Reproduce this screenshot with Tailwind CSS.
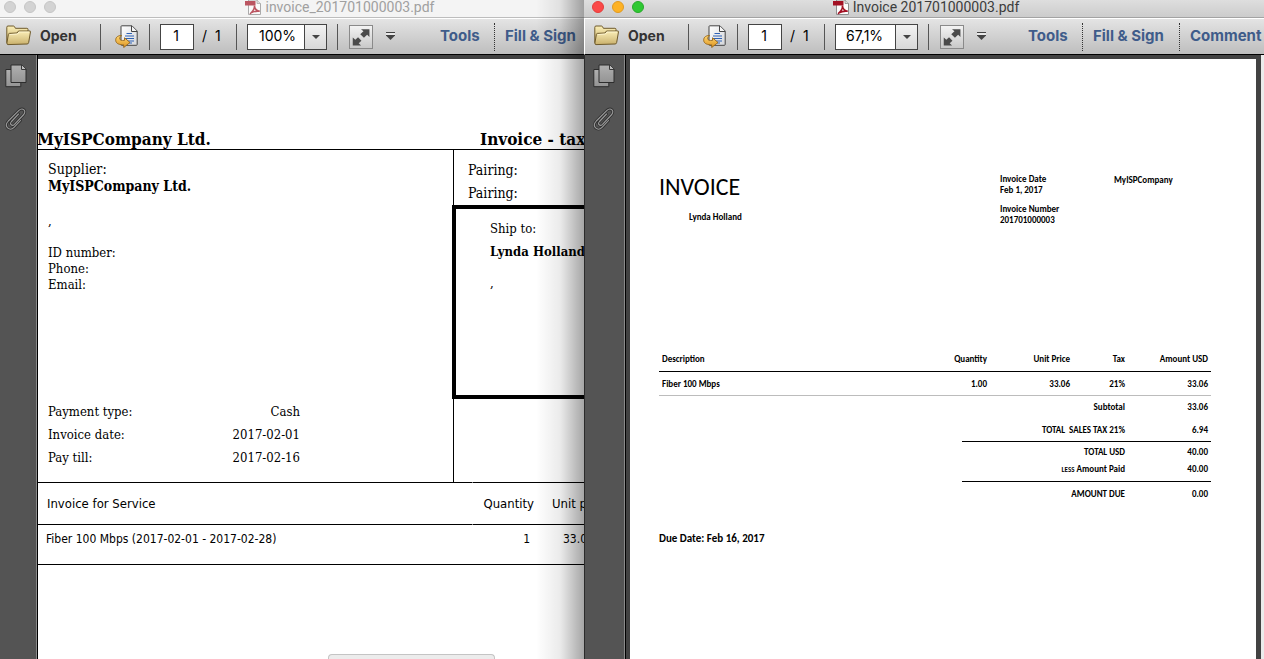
<!DOCTYPE html>
<html lang="en">
<head>
<meta charset="utf-8">
<title>Invoice 201701000003.pdf</title>
<script src="https://cdn.jsdelivr.net/npm/@tailwindcss/browser@4"></script>
</head>
<body class="h-screen overflow-hidden bg-white">
<svg class="absolute size-0" aria-hidden="true">
  <defs>
    <linearGradient id="gf" x1="0" y1="0" x2="0" y2="1"><stop offset="0" stop-color="#fbefb8"/><stop offset="1" stop-color="#c9b06c"/></linearGradient>
    <linearGradient id="gd" x1="0" y1="0" x2="1" y2="1"><stop offset="0" stop-color="#ffffff"/><stop offset="1" stop-color="#d4d6da"/></linearGradient>
    <linearGradient id="ga" x1="0" y1="0" x2="0" y2="1"><stop offset="0" stop-color="#ffd873"/><stop offset="1" stop-color="#dd9422"/></linearGradient>
    <linearGradient id="gp" x1="0" y1="0" x2="0" y2="1"><stop offset="0" stop-color="#b0b0b0"/><stop offset="1" stop-color="#949494"/></linearGradient>
  </defs>
  <symbol id="folder" viewBox="0 0 25 21">
    <path d="M.8 17.800V2.300Q.8 1 2 1h5.400q.8 0 1.200.8l.8 1.500h11.500q1.100 0 1.100 1.100V8" fill="url(#gf)" stroke="#6e5a2c"/>
    <path d="M3.400 8.400 11 8l1.500-2H24q.6 0 .5.700l-1.800 10.700q-.2 1.500-1.600 1.600L2 19.600Q.7 19.400.9 18L2.400 9.400q.2-1 1-1z" fill="url(#gf)" stroke="#6e5a2c"/>
    <path d="M4 9.500l7.500-.5L13 7h10" fill="none" stroke="#fff8d8" stroke-width=".8"/>
  </symbol>
  <symbol id="convert" viewBox="0 0 24 23">
    <path d="M6 1.500Q6 .8 6.800.8H17l5.200 5.200V19.500q0 .8-.8.8H6.800Q6 20.300 6 19.500z" fill="url(#gd)" stroke="#454545"/>
    <path d="M16.500 1v5.500H22" fill="#f5f5f5" stroke="#454545"/>
    <path d="M11.500 8.500H17M10 11h9M10 13.500h9M12 16h7M14 18h3" stroke="#2f63b5" stroke-width="1.200"/>
    <path d="M6.500 10.500C2 10.500.5 13 .7 15.500c.3 3.200 4 4.500 8 4.300v2.700l6.300-5-5.500-4.700v2.600c-3 .3-5-.2-4.800-2.200.1-1 .8-1.800 1.800-2.200z" fill="url(#ga)" stroke="#94641a" stroke-width=".9"/>
  </symbol>
  <symbol id="expand" viewBox="0 0 24 24">
    <path d="M12 3.500h9.200V12l-2.500-2.500-3.500 3.300-4-3.700 3.500-3.300zM3 12.500l2.800 2.600 3-2.800 3.700 3.800-3 2.700 2.600 2.500H3z" fill="#4b4b4b"/>
  </symbol>
  <symbol id="pages" viewBox="0 0 22 24">
    <path d="M.8 5.500h15v17.200H.8z" fill="url(#gp)" stroke="#2d2d2d"/>
    <path d="M6 1h11l4 4v13.500H6z" fill="url(#gp)" stroke="#2d2d2d"/>
    <path d="M16.500 1v4.500H21" fill="#bdbdbd" stroke="#3a3a3a"/>
  </symbol>
  <symbol id="clip" viewBox="0 0 22 24">
    <g fill="none" stroke-linecap="round" stroke-linejoin="round">
      <path d="M13.500 7 6.500 14.500c-2.300 2.600.5 5.200 3 2.800l8.800-9.300c4-4.300-.8-8-4.600-4.400L3.300 14c-5 5.400 1.200 11 6 6.200l6.200-6.700" stroke="#303030" stroke-width="2.800"/>
      <path d="M13.500 7 6.500 14.500c-2.300 2.600.5 5.200 3 2.800l8.800-9.300c4-4.300-.8-8-4.600-4.400L3.300 14c-5 5.400 1.200 11 6 6.200l6.200-6.700" stroke="#9b9b9b" stroke-width="1.100"/>
    </g>
  </symbol>
  <symbol id="pdf" viewBox="0 0 16 16">
    <path d="M3.500 0h8.500l3.500 3.500v11H3.500z" fill="#fdfdfd" stroke="#8d8d8d"/>
    <path d="M12 0v3.500h3.500" fill="#ddd" stroke="#8d8d8d" stroke-width=".8"/>
    <path d="M0 1h10.500v4.500H0z" fill="#a31224"/>
    <path d="M9.500 5.500c.2 3-1.500 6-4.500 8.300M9.500 6c.3 3 2.300 4.800 5.300 5.300-3.300-.6-6.300.2-9.300 1.700" fill="none" stroke="#a31224" stroke-width="1.600"/>
  </symbol>
  <symbol id="more" viewBox="0 0 9 9">
    <path d="M0 3h9" stroke="#fff"/><path d="M0 1.500h9M0 4.500h9" stroke="#444"/><path d="M.5 5h8l-4 4z" fill="#444"/>
  </symbol>
</svg>

<div class="flex h-full">
  <!-- Background window -->
  <section class="relative flex w-[584px] shrink-0 flex-col overflow-hidden" aria-label="invoice_201701000003.pdf">
    <header class="relative flex h-[18px] shrink-0 items-start justify-center border-b border-[#bdbdbd] bg-[#f4f4f4] pl-24">
      <div class="absolute left-1 top-px flex gap-2">
        <button aria-label="Close" class="size-3 rounded-full border border-[#c6c6c6] bg-[#d3d3d3]"></button>
        <button aria-label="Minimize" class="size-3 rounded-full border border-[#c6c6c6] bg-[#d3d3d3]"></button>
        <button aria-label="Zoom" class="size-3 rounded-full border border-[#c6c6c6] bg-[#d3d3d3]"></button>
      </div>
      <svg class="mr-1 h-4 w-4 opacity-70"><use href="#pdf"/></svg>
      <h1 class="font-[Roboto,sans-serif] text-[14px] leading-[15px] text-[#a0a0a0]">invoice_201701000003.pdf</h1>
    </header>
    <div class="flex h-[37px] shrink-0 items-center overflow-hidden whitespace-nowrap border-y border-t-white border-b-black bg-linear-to-b from-[#e4e4e4] to-[#bebebe] pl-[6px] font-[Inter,sans-serif] text-[14px] text-black">
      <button class="flex w-[94px] shrink-0 items-center gap-[9px] pb-0.5 font-bold text-[#333]"><svg class="h-[21px] w-[25px]"><use href="#folder"/></svg>Open</button>
      <span class="h-[26px] w-px shrink-0 bg-[#555]"></span>
      <button aria-label="Convert" class="ml-[14px] mr-[10px] shrink-0"><svg class="h-[23px] w-6"><use href="#convert"/></svg></button>
      <span class="h-[26px] w-px shrink-0 bg-[#555]"></span>
      <input aria-label="Page" value="1" class="ml-[10px] h-[26px] w-[34px] shrink-0 border border-[#444] bg-white pb-0.5 pr-0.5 text-center">
      <span class="ml-2 w-[34px] shrink-0 whitespace-pre pb-0.5">/  1</span>
      <span class="h-[26px] w-px shrink-0 bg-[#555]"></span>
      <div class="relative ml-[10px] mr-[10px] flex h-[26px] w-20 shrink-0 border border-[#444] bg-white">
        <select aria-label="Zoom level" class="w-full appearance-none bg-transparent pb-0.5 pl-[11px]"><option>100%</option></select>
        <span class="pointer-events-none absolute inset-y-0 right-0 flex w-[22px] items-center justify-center border-l border-[#444] bg-linear-to-b from-[#f2f2f2] to-[#d8d8d8]"><svg class="h-1 w-2" viewBox="0 0 8 4"><path d="M0 0h8L4 4z" fill="#444"/></svg></span>
      </div>
      <span class="h-[26px] w-px shrink-0 bg-[#555]"></span>
      <button aria-label="Full screen" class="ml-[11px] size-6 shrink-0 border border-[#8a8a8a] bg-linear-to-b from-[#f4f4f4] to-[#c8c8c8]"><svg class="size-full"><use href="#expand"/></svg></button>
      <button aria-label="More tools" class="mb-0.5 ml-[13px] mr-[45px] shrink-0"><svg class="size-[9px]"><use href="#more"/></svg></button>
      <button class="w-[54px] shrink-0 text-left text-[15px] font-bold text-[#3f5c8a]">Tools</button>
      <span class="mr-[10px] h-[28px] shrink-0 border-l border-dotted border-[#333]"></span>
      <button class="shrink-0 text-[15px] font-bold text-[#3f5c8a]">Fill &amp; Sign</button>
    </div>
    <div class="flex min-h-0 flex-1">
      <nav class="flex w-[38px] shrink-0 flex-col items-start gap-[19px] border-r border-black bg-[#545454] pl-[5px] pt-[9px] shadow-[inset_-1px_0_0_#8a8a8a]">
        <button aria-label="Page thumbnails"><svg class="h-6 w-[22px]"><use href="#pages"/></svg></button>
        <button aria-label="Attachments"><svg class="h-6 w-[22px]"><use href="#clip"/></svg></button>
      </nav>
      <main class="min-w-0 flex-1 overflow-hidden border-t-4 border-[#404040] bg-white font-['DejaVu_Serif_Condensed','DejaVu_Serif',serif] text-[13px] leading-[23px] text-black">
        <div class="w-[720px]">
          <div class="flex h-[91px] items-end border-b border-black text-[17px] font-bold leading-5">
            <h2 class="-ml-px w-[443px]">MyISPCompany Ltd.</h2>
            <h2>Invoice - tax document</h2>
          </div>
          <div class="flex h-[332px]">
            <div class="w-[415px] pl-[10px] pt-[11px]">
              <p class="text-[14px] leading-[17px]">Supplier:</p>
              <p class="text-[14px] font-bold leading-[17px]">MyISPCompany Ltd.</p>
              <p class="mt-[17px] leading-[17px]">,</p>
              <p class="mt-4 leading-4">ID number:</p>
              <p class="leading-4">Phone:</p>
              <p class="leading-4">Email:</p>
              <dl class="mt-[107px] grid w-[252px] grid-cols-2">
                <dt>Payment type:</dt><dd class="text-right">Cash</dd>
                <dt>Invoice date:</dt><dd class="text-right">2017-02-01</dd>
                <dt>Pay till:</dt><dd class="text-right">2017-02-16</dd>
              </dl>
            </div>
            <div class="flex-1 border-l border-black pt-[9px]">
              <p class="pl-[14px] text-[14px]">Pairing:</p>
              <p class="pl-[14px] text-[14px]">Pairing:</p>
              <div class="-ml-[2px] h-[194px] border-4 border-black pl-[34px] pt-2">
                <p>Ship to:</p>
                <p class="font-bold">Lynda Holland</p>
                <p class="mt-2">,</p>
              </div>
            </div>
          </div>
          <table class="w-full table-fixed border-separate border-spacing-0 text-left font-['DejaVu_Sans_Condensed','DejaVu_Sans',sans-serif] text-[13px]">
            <thead>
              <tr class="h-[43px]">
                <th class="w-[435px] border-y border-r border-y-black border-r-white pl-[9px] font-normal">Invoice for Service</th>
                <th class="w-[61px] border-y border-black text-right font-normal">Quantity</th>
                <th class="border-y border-black pl-[18px] font-normal">Unit price</th>
              </tr>
            </thead>
            <tbody class="text-[12px]">
              <tr class="h-10">
                <td class="border-b border-black pb-[10px] pl-2">Fiber 100 Mbps (2017-02-01 - 2017-02-28)</td>
                <td class="border-b border-black pb-[10px] pr-1 text-right">1</td>
                <td class="border-b border-black pb-[10px] pl-[29px]">33.06</td>
              </tr>
            </tbody>
          </table>
        </div>
      </main>
    </div>
    <div class="absolute bottom-0 left-[328px] h-[5px] w-[167px] rounded-t border border-b-0 border-[#c4c4c4] bg-[#ececec]"></div>
    <div class="pointer-events-none absolute inset-y-0 right-0 w-12 bg-linear-to-r from-black/0 via-black/8 to-black/35"></div>
  </section>

  <!-- Front window -->
  <section class="flex min-w-0 flex-1 flex-col overflow-hidden" aria-label="Invoice 201701000003.pdf">
    <header class="relative flex h-[18px] shrink-0 items-start justify-center border-b border-[#a3a3a3] bg-linear-to-b from-[#dedede] to-[#cccccc] pl-1">
      <div class="absolute left-2 top-px flex gap-2">
        <button aria-label="Close" class="size-3 rounded-full border border-[#e33e3c] bg-[#fb4948]"></button>
        <button aria-label="Minimize" class="size-3 rounded-full border border-[#e09a22] bg-[#fdb225]"></button>
        <button aria-label="Zoom" class="size-3 rounded-full border border-[#27a92b] bg-[#2fc833]"></button>
      </div>
      <svg class="mr-1 h-4 w-4"><use href="#pdf"/></svg>
      <h1 class="font-[Roboto,sans-serif] text-[14px] leading-[15px] text-[#3c3c3c]">Invoice 201701000003.pdf</h1>
    </header>
    <div class="flex h-[37px] shrink-0 items-center overflow-hidden whitespace-nowrap border-y border-l border-t-white border-l-white border-b-black bg-linear-to-b from-[#e4e4e4] to-[#bebebe] pl-[9px] font-[Inter,sans-serif] text-[14px] text-black">
      <button class="flex w-[94px] shrink-0 items-center gap-[9px] pb-0.5 font-bold text-[#333]"><svg class="h-[21px] w-[25px]"><use href="#folder"/></svg>Open</button>
      <span class="h-[26px] w-px shrink-0 bg-[#555]"></span>
      <button aria-label="Convert" class="ml-[14px] mr-[10px] shrink-0"><svg class="h-[23px] w-6"><use href="#convert"/></svg></button>
      <span class="h-[26px] w-px shrink-0 bg-[#555]"></span>
      <input aria-label="Page" value="1" class="ml-[10px] h-[26px] w-[34px] shrink-0 border border-[#444] bg-white pb-0.5 pr-0.5 text-center">
      <span class="ml-2 w-[34px] shrink-0 whitespace-pre pb-0.5">/  1</span>
      <span class="h-[26px] w-px shrink-0 bg-[#555]"></span>
      <div class="relative ml-[10px] mr-[10px] flex h-[26px] w-[83px] shrink-0 border border-[#444] bg-white">
        <select aria-label="Zoom level" class="w-full appearance-none bg-transparent pb-0.5 pl-[10px]"><option>67,1%</option></select>
        <span class="pointer-events-none absolute inset-y-0 right-0 flex w-[22px] items-center justify-center border-l border-[#444] bg-linear-to-b from-[#f2f2f2] to-[#d8d8d8]"><svg class="h-1 w-2" viewBox="0 0 8 4"><path d="M0 0h8L4 4z" fill="#444"/></svg></span>
      </div>
      <span class="h-[26px] w-px shrink-0 bg-[#555]"></span>
      <button aria-label="Full screen" class="ml-[11px] size-6 shrink-0 border border-[#8a8a8a] bg-linear-to-b from-[#f4f4f4] to-[#c8c8c8]"><svg class="size-full"><use href="#expand"/></svg></button>
      <button aria-label="More tools" class="mb-0.5 ml-[13px] mr-[42px] shrink-0"><svg class="size-[9px]"><use href="#more"/></svg></button>
      <button class="w-[54px] shrink-0 text-left text-[15px] font-bold text-[#3f5c8a]">Tools</button>
      <span class="mr-[10px] h-[28px] shrink-0 border-l border-dotted border-[#333]"></span>
      <button class="w-[86px] shrink-0 text-left text-[15px] font-bold text-[#3f5c8a]">Fill &amp; Sign</button>
      <span class="mr-[10px] h-[28px] shrink-0 border-l border-dotted border-[#333]"></span>
      <button class="shrink-0 text-[15px] font-bold text-[#3f5c8a]">Comment</button>
    </div>
    <div class="flex min-h-0 flex-1">
      <nav class="flex w-[42px] shrink-0 flex-col items-start gap-[19px] border-x border-l-[#2b2b2b] border-r-black bg-[#545454] pl-2 pt-[9px] shadow-[inset_-1px_0_0_#8a8a8a]">
        <button aria-label="Page thumbnails"><svg class="h-6 w-[22px]"><use href="#pages"/></svg></button>
        <button aria-label="Attachments"><svg class="h-6 w-[22px]"><use href="#clip"/></svg></button>
      </nav>
      <main class="min-w-0 flex-1 border-l-4 border-r-[5px] border-t-4 border-[#424242] bg-white pl-[29px] pr-[45px] font-[Carlito,Lato,sans-serif] text-[9px] font-bold leading-[11px] text-black">
        <div class="flex pt-[114px]">
          <div class="w-[341px]">
            <h2 class="text-[24px] font-normal leading-[28px]">INVOICE</h2>
            <p class="ml-[30px] mt-[10px]">Lynda Holland</p>
          </div>
          <div class="w-[114px]">
            <p>Invoice Date</p>
            <p>Feb 1, 2017</p>
            <p class="mt-2">Invoice Number</p>
            <p>201701000003</p>
          </div>
          <p class="mt-px">MyISPCompany</p>
        </div>
        <table class="mt-[122px] w-full table-fixed border-collapse text-right">
          <thead>
            <tr class="h-6 border-b border-black">
              <th class="pl-[3px] text-left">Description</th>
              <th class="w-[83px]">Quantity</th>
              <th class="w-[83px]">Unit Price</th>
              <th class="w-[55px]">Tax</th>
              <th class="w-[86px] pr-[3px]">Amount USD</th>
            </tr>
          </thead>
          <tbody>
            <tr class="h-6 border-b border-[#bcbcbc]">
              <td class="pl-[3px] text-left">Fiber 100 Mbps</td><td>1.00</td><td>33.06</td><td>21%</td><td class="pr-[3px]">33.06</td>
            </tr>
          </tbody>
        </table>
        <table class="ml-auto w-[249px] table-fixed border-collapse text-right">
          <tbody>
            <tr class="h-[22px]"><th class="w-[163px]">Subtotal</th><td class="pr-[3px]">33.06</td></tr>
            <tr class="h-6 border-b border-black"><th class="whitespace-pre">TOTAL  SALES TAX 21%</th><td class="pr-[3px]">6.94</td></tr>
            <tr class="h-5"><th>TOTAL USD</th><td class="pr-[3px]">40.00</td></tr>
            <tr class="h-5 border-b border-black align-top"><th class="pt-px"><span class="text-[7px]">LESS</span> Amount Paid</th><td class="pr-[3px] pt-px">40.00</td></tr>
            <tr class="h-6"><th>AMOUNT DUE</th><td class="pr-[3px]">0.00</td></tr>
          </tbody>
        </table>
        <p class="mt-[27px] text-[11px]">Due Date: Feb 16, 2017</p>
      </main>
      <div class="w-[3px] shrink-0 bg-[#ececec]"></div>
    </div>
  </section>
</div>
</body>
</html>
